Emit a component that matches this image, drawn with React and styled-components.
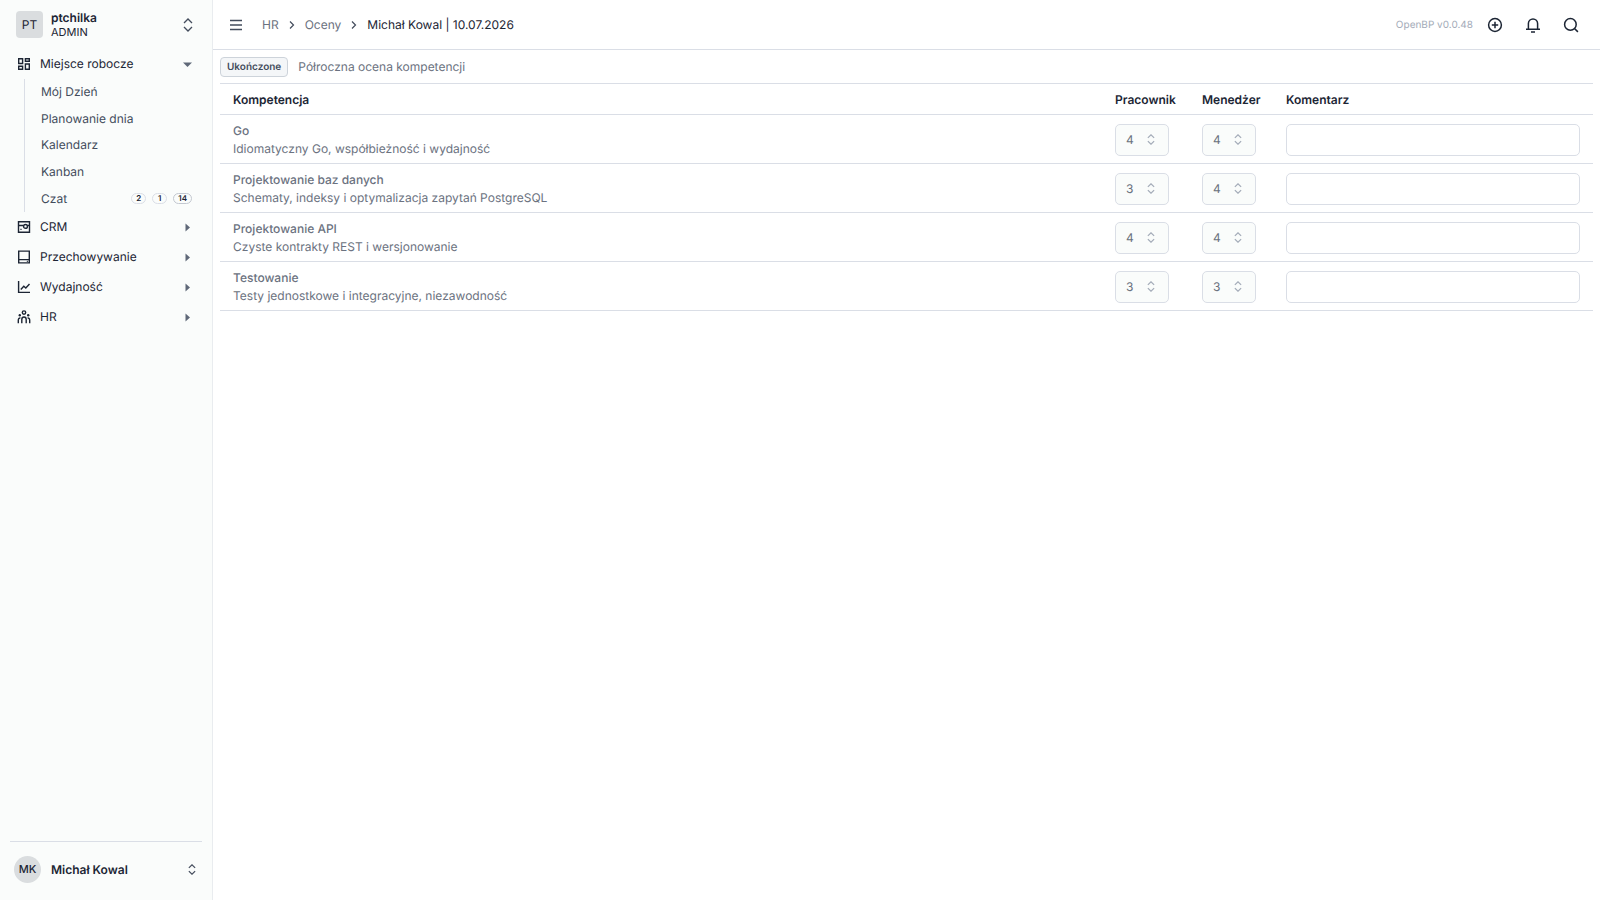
import React from "react";
import styled, { createGlobalStyle } from "styled-components";

const color = {
  ink: "#1c2534",
  body: "#434c5c",
  muted: "#6b7280",
  faint: "#a3abb8",
  line: "#dadee6",
  side: "#fafcfb",
  chip: "#dadddf",
};

const GlobalStyle = createGlobalStyle`
  *, *::before, *::after { box-sizing: border-box; }
  body {
    margin: 0;
    background: #fff;
    color: ${color.ink};
    font-family: Inter, "Liberation Sans", sans-serif;
    font-size: 12px;
    line-height: 18px;
    text-rendering: geometricPrecision;
  }
  button, input, select { font: inherit; color: inherit; text-rendering: inherit; }
  a { color: inherit; text-decoration: none; }
`;

const Shell = styled.div`
  display: flex;
  min-height: 100vh;
`;

const Sidebar = styled.aside`
  flex: 0 0 213px;
  display: flex;
  flex-direction: column;
  background: ${color.side};
  border-right: 1px solid #e9ecef;
`;

const PlainButton = styled.button`
  border: 0;
  padding: 0;
  background: none;
  cursor: pointer;
  text-align: left;
`;

const AccountButton = styled(PlainButton)`
  display: flex;
  align-items: center;
  width: 100%;
  height: 49px;
  padding: 0 19px 0 16px;
  & > svg { color: ${color.body}; }
`;

const UserButton = styled(AccountButton)`
  height: 54px;
  padding: 0 6px 0 4px;
`;

const Avatar = styled.span`
  display: grid;
  place-items: center;
  flex: none;
  width: 27px;
  height: 27px;
  margin-right: ${(p) => (p.$round ? "10px" : "8px")};
  border-radius: ${(p) => (p.$round ? "50%" : "4px")};
  background: ${color.chip};
  font-size: ${(p) => (p.$round ? "11px" : "12px")};
  font-weight: ${(p) => (p.$round ? 500 : 400)};
`;

const AccountText = styled.span`
  flex: 1;
  display: flex;
  flex-direction: column;
  font-size: 12px;
  line-height: 15px;
  font-weight: 600;
`;

const Role = styled.span`
  font-size: 11px;
  font-weight: 400;
`;

const Nav = styled.nav`
  flex: 1;
`;

const GroupButton = styled(PlainButton)`
  display: flex;
  align-items: center;
  gap: 8px;
  width: 100%;
  height: 30px;
  padding: 0 20px 0 16px;
`;

const GroupLabel = styled.span`
  flex: 1;
`;

const SubList = styled.ul`
  display: grid;
  grid-auto-rows: 1fr;
  height: 133px;
  margin: 0 0 0 24px;
  padding: 0;
  list-style: none;
  border-left: 1px solid ${color.line};
`;

const SubLink = styled.a`
  display: flex;
  align-items: center;
  gap: 6px;
  height: 100%;
  padding: 0 20px 0 16px;
  color: ${color.body};
`;

const SubLabel = styled.span`
  flex: 1;
`;

const Count = styled.span`
  min-width: 15px;
  padding: 0 4px;
  border: 1px solid ${(p) => (p.$strong ? "#c3c8d0" : color.line)};
  border-radius: 6px;
  font-size: 8px;
  line-height: 9px;
  font-weight: 600;
  text-align: center;
  color: ${color.ink};
`;

const SideFooter = styled.footer`
  margin: 0 10px;
  padding-bottom: 4px;
  border-top: 1px solid ${color.line};
`;

const Main = styled.main`
  flex: 1;
  min-width: 0;
`;

const Header = styled.header`
  display: flex;
  align-items: center;
  height: 50px;
  padding: 0 10px 0 16px;
  border-bottom: 1px solid ${color.line};
`;

const IconButton = styled(PlainButton)`
  display: grid;
  place-items: center;
  width: 38px;
  height: 38px;
`;

const MenuButton = styled(IconButton)`
  width: 14px;
  color: ${color.body};
`;

const Crumbs = styled.ol`
  flex: 1;
  display: flex;
  align-items: center;
  gap: 9px;
  margin: 0;
  padding: 0 0 0 19px;
  list-style: none;
  color: ${color.muted};
`;

const Crumb = styled.li`
  display: flex;
  align-items: center;
  gap: 9px;
  ${(p) => p.$current && `color: ${color.ink};`}
`;

const Version = styled.span`
  margin-right: 3px;
  font-size: 10px;
  color: ${color.faint};
`;

const Content = styled.section`
  padding: 0 7px;
`;

const Summary = styled.div`
  display: flex;
  align-items: center;
  gap: 10px;
  height: 33px;
  color: ${color.muted};
`;

const Status = styled.span`
  padding: 0 6px;
  border: 1px solid #cdd3da;
  border-radius: 4px;
  background: #f4f6f8;
  font-size: 10px;
  line-height: 18px;
  font-weight: 600;
  color: ${color.body};
`;

const Table = styled.table`
  width: 100%;
  table-layout: fixed;
  border-collapse: collapse;
  border-top: 1px solid ${color.line};
`;

const Col = styled.col`
  width: ${(p) => p.$width || "auto"};
`;

const HeadCell = styled.th`
  height: 31px;
  padding: 1px 13px 0;
  text-align: left;
  font-weight: 600;
  white-space: nowrap;
`;

const Row = styled.tr`
  border-bottom: 1px solid ${color.line};
`;

const Cell = styled.td`
  height: 49px;
  padding: 1px 13px 0;
  color: ${color.muted};
`;

const Skill = styled.div`
  font-weight: 500;
`;

const SelectBox = styled.label`
  display: grid;
  align-items: center;
  width: 54px;
  height: 32px;
  color: ${color.muted};
  & > * { grid-area: 1 / 1; }
  & > svg { justify-self: end; margin-right: 14px; color: ${color.faint}; pointer-events: none; }
`;

const Score = styled.select`
  appearance: none;
  width: 100%;
  height: 32px;
  padding: 0 10px;
  border: 1px solid ${color.line};
  border-radius: 5px;
  background: ${color.side};
  opacity: 1;
`;

const Comment = styled.input`
  display: block;
  width: 100%;
  height: 32px;
  padding: 0 10px;
  border: 1px solid ${color.line};
  border-radius: 5px;
  background: #fff;
`;

const Svg = ({ w = 16, h = w, box = `0 0 ${w} ${h}`, stroke = 1.4, children }) => (
  <svg width={w} height={h} viewBox={box} fill="none" stroke="currentColor" strokeWidth={stroke} aria-hidden="true">
    {children}
  </svg>
);

const UpDown = ({ small }) => (
  <Svg w={small ? 8 : 10} h={small ? 11 : 14} box="0 0 10 14" stroke={small ? 1.5 : 1.3}>
    <path d="M1 5l4-4 4 4M1 9l4 4 4-4" />
  </Svg>
);
const Caret = ({ open }) => (
  <Svg w={9}>
    <path d={open ? "M0 2.5h9L4.5 7z" : "M2.5 0.5v8L7 4.5z"} fill="#5f6878" stroke="none" />
  </Svg>
);
const ChevronRight = () => (
  <Svg w={8} h={8} stroke={1.2}>
    <path d="M2 0.5L5.5 4 2 7.5" stroke={color.body} />
  </Svg>
);

const icons = {
  grid: (
    <Svg>
      <path d="M2.7 2.7h3.9v4.8H2.7zM9.4 2.7h3.9v2.6H9.4zM2.7 10.2h3.9v3.1H2.7zM9.4 8h3.9v5.3H9.4z" />
    </Svg>
  ),
  crm: (
    <Svg>
      <path d="M2.5 2.7h11v10.6h-11zM2.5 6.5h5M11.4 6.5h2.1" />
      <circle cx="9.5" cy="7.4" r="1.9" />
      <path d="M4.4 10.4h1.2" strokeWidth="1.1" />
    </Svg>
  ),
  storage: (
    <Svg>
      <path d="M2.7 2.1h10.6v11.8H2.7zM2.7 10.6h10.6" />
      <path d="M10.8 12.3h1.2" strokeWidth="1" />
    </Svg>
  ),
  chart: (
    <Svg>
      <path d="M2.6 2v11.4H14" />
      <path d="M4.8 10.4l3-3.2 2 1.8 3.7-4" />
    </Svg>
  ),
  people: (
    <Svg>
      <circle cx="8" cy="3.6" r="1.7" />
      <circle cx="3.8" cy="6.2" r="1.2" fill="currentColor" stroke="none" />
      <circle cx="12.2" cy="6.2" r="1.2" fill="currentColor" stroke="none" />
      <path d="M5.8 14.2v-3.7c0-3.4 4.4-3.4 4.4 0v3.7M2.3 14.2v-3c0-1.6.8-2.4 2.1-2.2M13.7 14.2v-3c0-1.6-.8-2.4-2.1-2.2" />
    </Svg>
  ),
};

const subItems = [
  { label: "Mój Dzień" },
  { label: "Planowanie dnia" },
  { label: "Kalendarz" },
  { label: "Kanban" },
  { label: "Czat", counts: ["2", "1", "14"] },
];

const groups = [
  { label: "Miejsce robocze", icon: "grid", items: subItems },
  { label: "CRM", icon: "crm" },
  { label: "Przechowywanie", icon: "storage" },
  { label: "Wydajność", icon: "chart" },
  { label: "HR", icon: "people" },
];

const skills = [
  { name: "Go", text: "Idiomatyczny Go, współbieżność i wydajność", own: "4", boss: "4" },
  { name: "Projektowanie baz danych", text: "Schematy, indeksy i optymalizacja zapytań PostgreSQL", own: "3", boss: "4" },
  { name: "Projektowanie API", text: "Czyste kontrakty REST i wersjonowanie", own: "4", boss: "4" },
  { name: "Testowanie", text: "Testy jednostkowe i integracyjne, niezawodność", own: "3", boss: "3" },
];

const ScoreSelect = ({ label, value }) => (
  <SelectBox>
    <Score aria-label={label} defaultValue={value} disabled>
      {["1", "2", "3", "4", "5"].map((n) => (
        <option key={n}>{n}</option>
      ))}
    </Score>
    <UpDown small />
  </SelectBox>
);

export default function App() {
  return (
    <Shell>
      <GlobalStyle />
      <Sidebar>
        <AccountButton type="button">
          <Avatar>PT</Avatar>
          <AccountText>
            ptchilka
            <Role>ADMIN</Role>
          </AccountText>
          <UpDown />
        </AccountButton>
        <Nav>
          {groups.map((g) => (
            <React.Fragment key={g.label}>
              <GroupButton type="button" aria-expanded={!!g.items}>
                {icons[g.icon]}
                <GroupLabel>{g.label}</GroupLabel>
                <Caret open={!!g.items} />
              </GroupButton>
              {g.items && (
                <SubList>
                  {g.items.map((item) => (
                    <li key={item.label}>
                      <SubLink href="#">
                        <SubLabel>{item.label}</SubLabel>
                        {item.counts?.map((c) => (
                          <Count key={c} $strong={c.length > 1}>{c}</Count>
                        ))}
                      </SubLink>
                    </li>
                  ))}
                </SubList>
              )}
            </React.Fragment>
          ))}
        </Nav>
        <SideFooter>
          <UserButton type="button">
            <Avatar $round>MK</Avatar>
            <AccountText>Michał Kowal</AccountText>
            <UpDown small />
          </UserButton>
        </SideFooter>
      </Sidebar>
      <Main>
        <Header>
          <MenuButton type="button" aria-label="Menu">
            <Svg w={14} stroke={1.3}>
              <path d="M1 2.5h12M1 7h12M1 11.5h12" />
            </Svg>
          </MenuButton>
          <Crumbs>
            <Crumb><a href="#">HR</a></Crumb>
            <Crumb><ChevronRight /><a href="#">Oceny</a></Crumb>
            <Crumb $current><ChevronRight />Michał Kowal | 10.07.2026</Crumb>
          </Crumbs>
          <Version>OpenBP v0.0.48</Version>
          <IconButton type="button" aria-label="Dodaj">
            <Svg stroke={1.5}>
              <circle cx="8" cy="8" r="6.4" />
              <path d="M8 4.8v6.4M4.8 8h6.4" />
            </Svg>
          </IconButton>
          <IconButton type="button" aria-label="Powiadomienia">
            <Svg stroke={1.5}>
              <path d="M3.4 12V6.6a4.6 4.6 0 0 1 9.2 0V12M1 12.2h14M6 14.9h4" />
            </Svg>
          </IconButton>
          <IconButton type="button" aria-label="Szukaj">
            <Svg stroke={1.5}>
              <circle cx="7.4" cy="7.4" r="5.8" />
              <path d="M11.5 11.5l3.4 3.4" />
            </Svg>
          </IconButton>
        </Header>
        <Content>
          <Summary>
            <Status>Ukończone</Status>
            Półroczna ocena kompetencji
          </Summary>
          <Table>
            <colgroup>
              <Col />
              <Col $width="87px" />
              <Col $width="84px" />
              <Col $width="320px" />
            </colgroup>
            <thead>
              <Row>
                <HeadCell>Kompetencja</HeadCell>
                <HeadCell>Pracownik</HeadCell>
                <HeadCell>Menedżer</HeadCell>
                <HeadCell>Komentarz</HeadCell>
              </Row>
            </thead>
            <tbody>
              {skills.map((s) => (
                <Row key={s.name}>
                  <Cell>
                    <Skill>{s.name}</Skill>
                    {s.text}
                  </Cell>
                  <Cell><ScoreSelect label={`Pracownik: ${s.name}`} value={s.own} /></Cell>
                  <Cell><ScoreSelect label={`Menedżer: ${s.name}`} value={s.boss} /></Cell>
                  <Cell><Comment type="text" aria-label={`Komentarz: ${s.name}`} /></Cell>
                </Row>
              ))}
            </tbody>
          </Table>
        </Content>
      </Main>
    </Shell>
  );
}
